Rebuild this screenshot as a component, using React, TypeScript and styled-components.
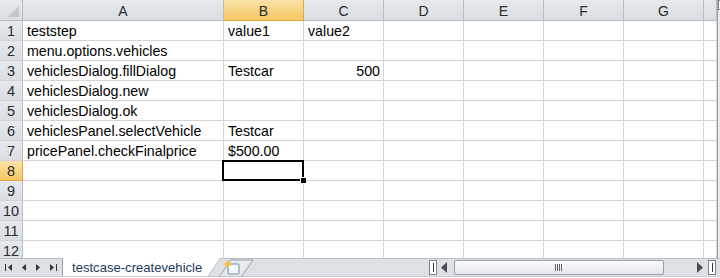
import React from "react";
import styled, { createGlobalStyle, css } from "styled-components";

const GlobalStyle = createGlobalStyle`
  html, body {
    margin: 0;
    padding: 0;
    background: #fff;
    overflow: hidden;
  }
`;

const COLS = ["A", "B", "C", "D", "E", "F", "G", ""];
const COL_WIDTHS = [23, 201, 80, 80, 80, 80, 80, 80, 13];

type Cell = { text: string; align?: "left" | "right" };

const rows: Cell[][] = [
  [{ text: "teststep" }, { text: "value1" }, { text: "value2" }],
  [{ text: "menu.options.vehicles" }],
  [{ text: "vehiclesDialog.fillDialog" }, { text: "Testcar" }, { text: "500", align: "right" }],
  [{ text: "vehiclesDialog.new" }],
  [{ text: "vehiclesDialog.ok" }],
  [{ text: "vehiclesPanel.selectVehicle" }, { text: "Testcar" }],
  [{ text: "pricePanel.checkFinalprice" }, { text: "$500.00" }],
  [],
  [],
  [],
  [],
  [],
];

const Window = styled.div`
  width: 720px;
  height: 278px;
  display: flex;
  flex-direction: column;
  font-family: "Liberation Sans", Arial, sans-serif;
  overflow: hidden;
`;

const SheetArea = styled.div`
  flex: 1;
  display: flex;
  min-height: 0;
  overflow: hidden;
`;

const Grid = styled.div`
  display: grid;
  grid-template-columns: ${COL_WIDTHS.map((w) => `${w}px`).join(" ")};
  grid-auto-rows: 20px;
  grid-template-rows: 21px;
  width: 717px;
  align-content: start;
  position: relative;
`;

const headerBg = css`
  background: linear-gradient(#e6e9ed, #dadde2);
  color: #2b2b2b;
`;

const activeBg = css`
  background: linear-gradient(#fbe3a8, #f4c763);
  color: #2b2b2b;
`;

const Corner = styled.div`
  ${headerBg};
  border-right: 1px solid #b9bec6;
  border-bottom: 1px solid #b9bec6;
  position: relative;
  &::after {
    content: "";
    position: absolute;
    right: 3px;
    bottom: 3px;
    border-left: 11px solid transparent;
    border-bottom: 11px solid #c4c8ce;
  }
`;

const ColHeader = styled.div<{ $active?: boolean }>`
  ${(p) => (p.$active ? activeBg : headerBg)};
  border-right: 1px solid ${(p) => (p.$active ? "#e2a93f" : "#b9bec6")};
  border-bottom: 1px solid ${(p) => (p.$active ? "#e2a93f" : "#b9bec6")};
  display: flex;
  align-items: center;
  justify-content: center;
  font-size: 14px;
  padding-top: 1px;
`;

const RowHeader = styled.div<{ $active?: boolean }>`
  ${(p) => (p.$active ? activeBg : headerBg)};
  border-right: 1px solid ${(p) => (p.$active ? "#e2a93f" : "#b9bec6")};
  border-bottom: 1px solid ${(p) => (p.$active ? "#e2a93f" : "#d0d4d9")};
  display: flex;
  align-items: center;
  justify-content: center;
  font-size: 14.5px;
`;

const DataCell = styled.div<{ $align?: "left" | "right" }>`
  border-right: 1px solid #d4d4d4;
  border-bottom: 1px solid #d4d4d4;
  display: flex;
  align-items: center;
  justify-content: ${(p) => (p.$align === "right" ? "flex-end" : "flex-start")};
  padding: 1px 3px 0 4px;
  font-size: 14.2px;
  color: #000;
  white-space: nowrap;
  overflow: visible;
`;

const Selection = styled.div`
  position: absolute;
  left: 222px;
  top: 160px;
  width: 78px;
  height: 17px;
  border: 2px solid #000;
  pointer-events: none;
  &::after {
    content: "";
    position: absolute;
    right: -5px;
    bottom: -5px;
    width: 5px;
    height: 5px;
    background: #000;
    border: 1px solid #fff;
  }
`;

const VScroll = styled.div`
  width: 3px;
  border-left: 1px solid #9aa0a8;
  background: #e9ecef;
  position: relative;
  &::before {
    content: "";
    position: absolute;
    top: 0;
    left: 0;
    width: 2px;
    height: 8px;
    border: 1px solid #7d838b;
    background: #fff;
  }
`;

const BottomBar = styled.div`
  height: 19px;
  flex-shrink: 0;
  display: flex;
  align-items: stretch;
  background: #dde1e6;
  border-top: 1px solid #b9bec6;
  border-bottom: 1px solid #c9cdd2;
  box-sizing: border-box;
  margin-bottom: 1px;
`;

const NavGroup = styled.div`
  width: 58px;
  display: flex;
  align-items: center;
  justify-content: space-around;
  padding: 0 2px;
  flex-shrink: 0;
`;

const Tab = styled.div`
  margin-top: -1px;
  padding: 0 0 0 9px;
  display: flex;
  align-items: center;
  background: #fff;
  color: #243a5a;
  font-size: 13.1px;
  white-space: nowrap;
  border-left: 1px solid #9aa0a8;
  clip-path: polygon(0 0, 100% 0, calc(100% - 12px) 100%, 0 100%);
  width: 158px;
  flex-shrink: 0;
  box-sizing: border-box;
`;

const TabEdge = styled.svg`
  margin-left: -13px;
  margin-top: -1px;
  flex-shrink: 0;
`;

const NewTab = styled.div`
  width: 40px;
  display: flex;
  align-items: center;
  margin-left: -3px;
  flex-shrink: 0;
`;

const Spacer = styled.div`
  flex: 1;
`;

const SplitBox = styled.div`
  width: 6px;
  height: 13px;
  align-self: center;
  border: 1px solid #7d838b;
  background: #fff;
  display: flex;
  justify-content: center;
  flex-shrink: 0;
  &::after {
    content: "";
    width: 1px;
    margin: 2px 0;
    background: #333;
  }
`;

const HScroll = styled.div`
  width: 271px;
  display: flex;
  align-items: center;
  padding: 0 5px 0 4px;
  box-sizing: border-box;
  flex-shrink: 0;
`;

const Thumb = styled.div`
  width: 208px;
  height: 13px;
  margin-left: 6px;
  margin-right: auto;
  border: 1px solid #9aa0a8;
  border-radius: 2px;
  background: linear-gradient(#fbfbfc, #e3e6ea);
  display: flex;
  align-items: center;
  justify-content: center;
`;

const Arrow = ({ dir, bar }: { dir: "left" | "right"; bar?: boolean }) => (
  <svg width="8" height="9" viewBox="0 0 8 9">
    {dir === "left" ? (
      <>
        {bar && <rect x="0" y="1" width="1" height="7" fill="#333" />}
        <polygon points={bar ? "7,1 3,4.5 7,8" : "6,1 2,4.5 6,8"} fill="#333" />
      </>
    ) : (
      <>
        <polygon points={bar ? "1,1 5,4.5 1,8" : "2,1 6,4.5 2,8"} fill="#333" />
        {bar && <rect x="7" y="1" width="1" height="7" fill="#333" />}
      </>
    )}
  </svg>
);

const ScrollArrow = ({ dir }: { dir: "left" | "right" }) => (
  <svg width="7" height="11" viewBox="0 0 7 11">
    <polygon points={dir === "left" ? "6,0 0,5.5 6,11" : "1,0 7,5.5 1,11"} fill="#4a4f57" />
  </svg>
);

export default function App() {
  return (
    <Window>
      <GlobalStyle />
      <SheetArea>
        <Grid>
          <Corner />
          {COLS.map((c, i) => (
            <ColHeader key={i} $active={c === "B"}>
              {c}
            </ColHeader>
          ))}
          {rows.map((r, ri) => (
            <React.Fragment key={ri}>
              <RowHeader $active={ri === 7}>{ri + 1}</RowHeader>
              {COLS.map((_, ci) => (
                <DataCell key={ci} $align={r[ci]?.align}>
                  {r[ci]?.text ?? ""}
                </DataCell>
              ))}
            </React.Fragment>
          ))}
          <Selection />
        </Grid>
        <VScroll />
      </SheetArea>
      <BottomBar>
        <NavGroup>
          <Arrow dir="left" bar />
          <Arrow dir="left" />
          <Arrow dir="right" />
          <Arrow dir="right" bar />
        </NavGroup>
        <Tab>testcase-createvehicle</Tab>
        <TabEdge width="14" height="19" viewBox="0 0 14 19">
          <line x1="13" y1="0" x2="1" y2="18" stroke="#8d939b" />
        </TabEdge>
        <NewTab>
          <svg width="36" height="18" viewBox="0 0 36 18">
            <polygon points="13,1 35,1 23,18 1,18" fill="#e8ebee" stroke="#9aa0a8" />
            <rect x="10" y="5" width="11" height="10" rx="1" fill="#f4f7fb" stroke="#6a86a8" />
            <circle cx="10" cy="5" r="2.5" fill="#f7c23a" />
            <path d="M10 1 V9 M6 5 H14" stroke="#f7c23a" strokeWidth="1" />
          </svg>
        </NewTab>
        <Spacer />
        <SplitBox />
        <HScroll>
          <ScrollArrow dir="left" />
          <Thumb>
            <svg width="8" height="7" viewBox="0 0 8 7">
              <path d="M0.5 0 V7 M2.5 0 V7 M4.5 0 V7 M6.5 0 V7" stroke="#666" />
            </svg>
          </Thumb>
          <ScrollArrow dir="right" />
        </HScroll>
        <SplitBox />
        <div style={{ width: 4 }} />
      </BottomBar>
    </Window>
  );
}
